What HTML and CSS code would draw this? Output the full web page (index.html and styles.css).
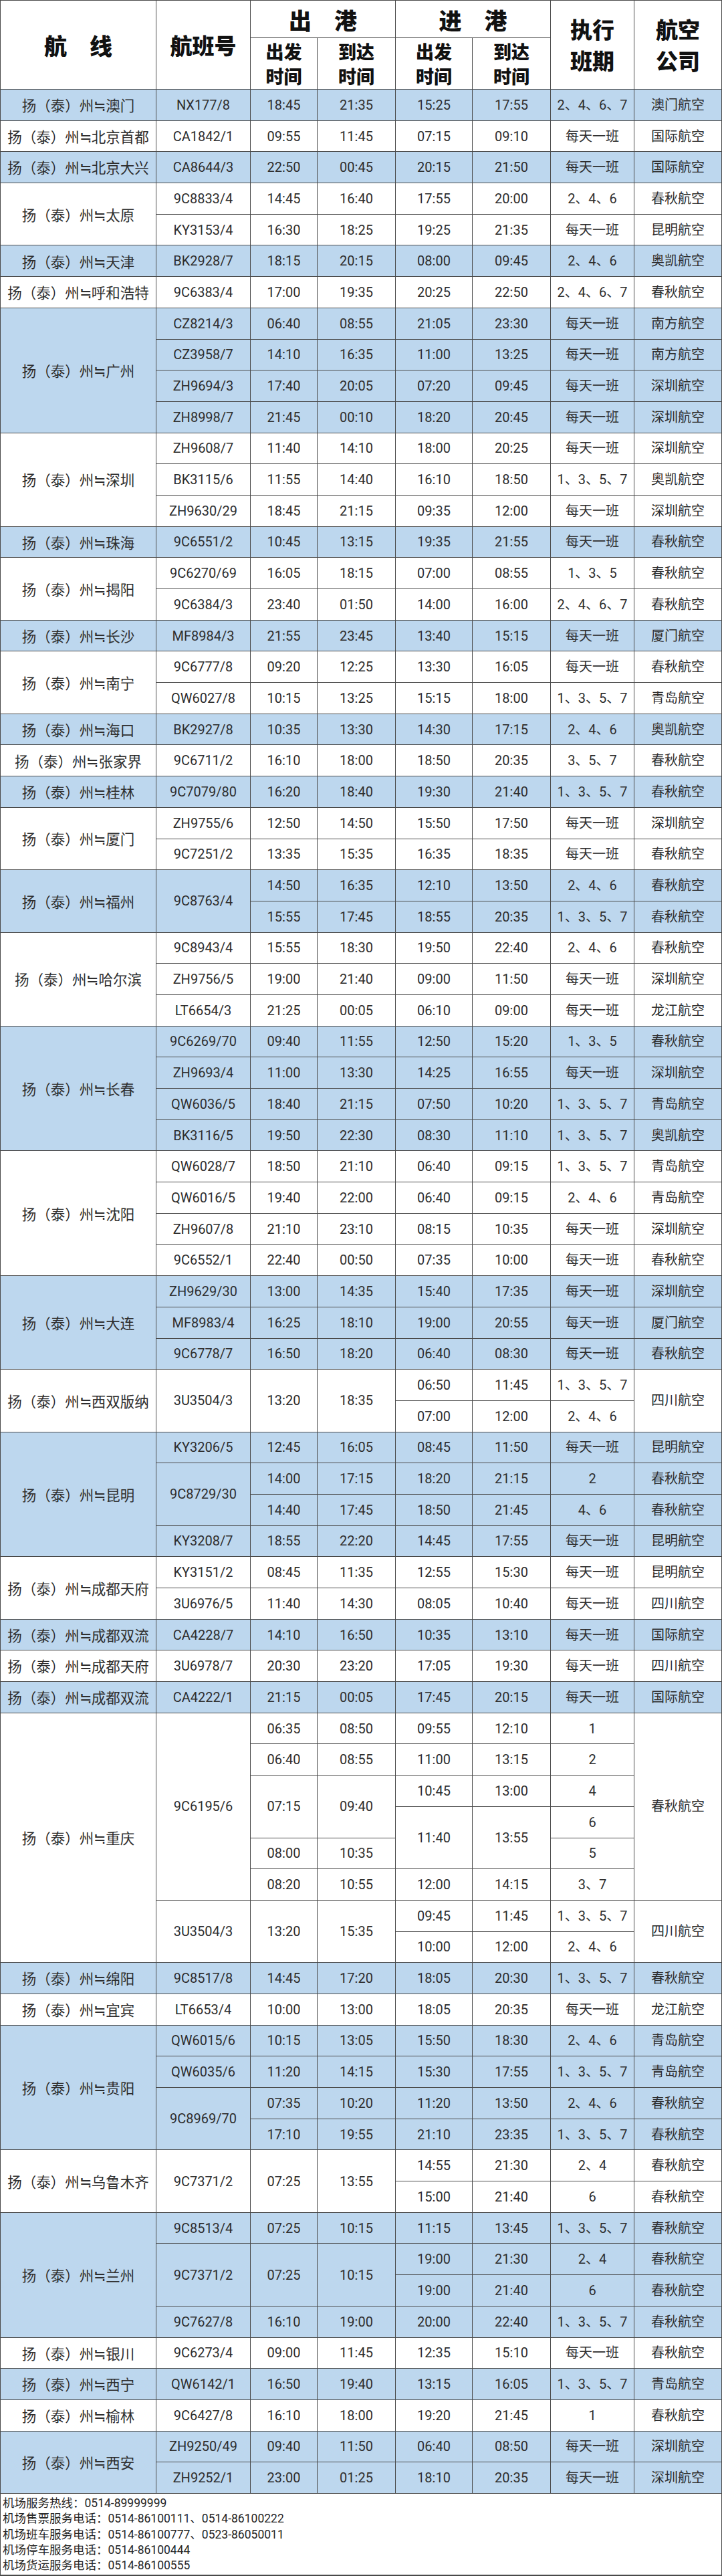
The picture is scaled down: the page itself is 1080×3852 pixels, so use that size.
FILE: index.html
```html
<!DOCTYPE html>
<html lang="zh-CN">
<head>
<meta charset="utf-8">
<title>扬州泰州国际机场航班时刻表</title>
<link rel="stylesheet" href="styles.css">
</head>
<body>
<div class="t">
  <div class="hd">
    <div class="h1 s2">航　线</div>
    <div class="h1 hn s2">航班号</div>
    <div class="h2 c2">出　港</div>
    <div class="h2 c2">进　港</div>
    <div class="h3 s2">执行<br>班期</div>
    <div class="h3 s2">航空<br>公司</div>
    <div class="h4">出发<br>时间</div>
    <div class="h4">到达<br>时间</div>
    <div class="h4">出发<br>时间</div>
    <div class="h4">到达<br>时间</div>
  </div>

  <div class="g b">
    <div class="r">扬（泰）州≒澳门</div><div>NX177/8</div><div>18:45</div><div>21:35</div><div>15:25</div><div>17:55</div><div>2、4、6、7</div><div>澳门航空</div>
  </div>
  <div class="g">
    <div class="r">扬（泰）州≒北京首都</div><div>CA1842/1</div><div>09:55</div><div>11:45</div><div>07:15</div><div>09:10</div><div>每天一班</div><div>国际航空</div>
  </div>
  <div class="g b">
    <div class="r">扬（泰）州≒北京大兴</div><div>CA8644/3</div><div>22:50</div><div>00:45</div><div>20:15</div><div>21:50</div><div>每天一班</div><div>国际航空</div>
  </div>
  <div class="g">
    <div class="r s2">扬（泰）州≒太原</div><div>9C8833/4</div><div>14:45</div><div>16:40</div><div>17:55</div><div>20:00</div><div>2、4、6</div><div>春秋航空</div>
    <div>KY3153/4</div><div>16:30</div><div>18:25</div><div>19:25</div><div>21:35</div><div>每天一班</div><div>昆明航空</div>
  </div>
  <div class="g b">
    <div class="r">扬（泰）州≒天津</div><div>BK2928/7</div><div>18:15</div><div>20:15</div><div>08:00</div><div>09:45</div><div>2、4、6</div><div>奥凯航空</div>
  </div>
  <div class="g">
    <div class="r">扬（泰）州≒呼和浩特</div><div>9C6383/4</div><div>17:00</div><div>19:35</div><div>20:25</div><div>22:50</div><div>2、4、6、7</div><div>春秋航空</div>
  </div>
  <div class="g b">
    <div class="r s4">扬（泰）州≒广州</div><div>CZ8214/3</div><div>06:40</div><div>08:55</div><div>21:05</div><div>23:30</div><div>每天一班</div><div>南方航空</div>
    <div>CZ3958/7</div><div>14:10</div><div>16:35</div><div>11:00</div><div>13:25</div><div>每天一班</div><div>南方航空</div>
    <div>ZH9694/3</div><div>17:40</div><div>20:05</div><div>07:20</div><div>09:45</div><div>每天一班</div><div>深圳航空</div>
    <div>ZH8998/7</div><div>21:45</div><div>00:10</div><div>18:20</div><div>20:45</div><div>每天一班</div><div>深圳航空</div>
  </div>
  <div class="g">
    <div class="r s3">扬（泰）州≒深圳</div><div>ZH9608/7</div><div>11:40</div><div>14:10</div><div>18:00</div><div>20:25</div><div>每天一班</div><div>深圳航空</div>
    <div>BK3115/6</div><div>11:55</div><div>14:40</div><div>16:10</div><div>18:50</div><div>1、3、5、7</div><div>奥凯航空</div>
    <div>ZH9630/29</div><div>18:45</div><div>21:15</div><div>09:35</div><div>12:00</div><div>每天一班</div><div>深圳航空</div>
  </div>
  <div class="g b">
    <div class="r">扬（泰）州≒珠海</div><div>9C6551/2</div><div>10:45</div><div>13:15</div><div>19:35</div><div>21:55</div><div>每天一班</div><div>春秋航空</div>
  </div>
  <div class="g">
    <div class="r s2">扬（泰）州≒揭阳</div><div>9C6270/69</div><div>16:05</div><div>18:15</div><div>07:00</div><div>08:55</div><div>1、3、5</div><div>春秋航空</div>
    <div>9C6384/3</div><div>23:40</div><div>01:50</div><div>14:00</div><div>16:00</div><div>2、4、6、7</div><div>春秋航空</div>
  </div>
  <div class="g b">
    <div class="r">扬（泰）州≒长沙</div><div>MF8984/3</div><div>21:55</div><div>23:45</div><div>13:40</div><div>15:15</div><div>每天一班</div><div>厦门航空</div>
  </div>
  <div class="g">
    <div class="r s2">扬（泰）州≒南宁</div><div>9C6777/8</div><div>09:20</div><div>12:25</div><div>13:30</div><div>16:05</div><div>每天一班</div><div>春秋航空</div>
    <div>QW6027/8</div><div>10:15</div><div>13:25</div><div>15:15</div><div>18:00</div><div>1、3、5、7</div><div>青岛航空</div>
  </div>
  <div class="g b">
    <div class="r">扬（泰）州≒海口</div><div>BK2927/8</div><div>10:35</div><div>13:30</div><div>14:30</div><div>17:15</div><div>2、4、6</div><div>奥凯航空</div>
  </div>
  <div class="g">
    <div class="r">扬（泰）州≒张家界</div><div>9C6711/2</div><div>16:10</div><div>18:00</div><div>18:50</div><div>20:35</div><div>3、5、7</div><div>春秋航空</div>
  </div>
  <div class="g b">
    <div class="r">扬（泰）州≒桂林</div><div>9C7079/80</div><div>16:20</div><div>18:40</div><div>19:30</div><div>21:40</div><div>1、3、5、7</div><div>春秋航空</div>
  </div>
  <div class="g">
    <div class="r s2">扬（泰）州≒厦门</div><div>ZH9755/6</div><div>12:50</div><div>14:50</div><div>15:50</div><div>17:50</div><div>每天一班</div><div>深圳航空</div>
    <div>9C7251/2</div><div>13:35</div><div>15:35</div><div>16:35</div><div>18:35</div><div>每天一班</div><div>春秋航空</div>
  </div>
  <div class="g b">
    <div class="r s2">扬（泰）州≒福州</div><div class="s2">9C8763/4</div><div>14:50</div><div>16:35</div><div>12:10</div><div>13:50</div><div>2、4、6</div><div>春秋航空</div>
    <div>15:55</div><div>17:45</div><div>18:55</div><div>20:35</div><div>1、3、5、7</div><div>春秋航空</div>
  </div>
  <div class="g">
    <div class="r s3">扬（泰）州≒哈尔滨</div><div>9C8943/4</div><div>15:55</div><div>18:30</div><div>19:50</div><div>22:40</div><div>2、4、6</div><div>春秋航空</div>
    <div>ZH9756/5</div><div>19:00</div><div>21:40</div><div>09:00</div><div>11:50</div><div>每天一班</div><div>深圳航空</div>
    <div>LT6654/3</div><div>21:25</div><div>00:05</div><div>06:10</div><div>09:00</div><div>每天一班</div><div>龙江航空</div>
  </div>
  <div class="g b">
    <div class="r s4">扬（泰）州≒长春</div><div>9C6269/70</div><div>09:40</div><div>11:55</div><div>12:50</div><div>15:20</div><div>1、3、5</div><div>春秋航空</div>
    <div>ZH9693/4</div><div>11:00</div><div>13:30</div><div>14:25</div><div>16:55</div><div>每天一班</div><div>深圳航空</div>
    <div>QW6036/5</div><div>18:40</div><div>21:15</div><div>07:50</div><div>10:20</div><div>1、3、5、7</div><div>青岛航空</div>
    <div>BK3116/5</div><div>19:50</div><div>22:30</div><div>08:30</div><div>11:10</div><div>1、3、5、7</div><div>奥凯航空</div>
  </div>
  <div class="g">
    <div class="r s4">扬（泰）州≒沈阳</div><div>QW6028/7</div><div>18:50</div><div>21:10</div><div>06:40</div><div>09:15</div><div>1、3、5、7</div><div>青岛航空</div>
    <div>QW6016/5</div><div>19:40</div><div>22:00</div><div>06:40</div><div>09:15</div><div>2、4、6</div><div>青岛航空</div>
    <div>ZH9607/8</div><div>21:10</div><div>23:10</div><div>08:15</div><div>10:35</div><div>每天一班</div><div>深圳航空</div>
    <div>9C6552/1</div><div>22:40</div><div>00:50</div><div>07:35</div><div>10:00</div><div>每天一班</div><div>春秋航空</div>
  </div>
  <div class="g b">
    <div class="r s3">扬（泰）州≒大连</div><div>ZH9629/30</div><div>13:00</div><div>14:35</div><div>15:40</div><div>17:35</div><div>每天一班</div><div>深圳航空</div>
    <div>MF8983/4</div><div>16:25</div><div>18:10</div><div>19:00</div><div>20:55</div><div>每天一班</div><div>厦门航空</div>
    <div>9C6778/7</div><div>16:50</div><div>18:20</div><div>06:40</div><div>08:30</div><div>每天一班</div><div>春秋航空</div>
  </div>
  <div class="g">
    <div class="r s2">扬（泰）州≒西双版纳</div><div class="s2">3U3504/3</div><div class="s2">13:20</div><div class="s2">18:35</div><div>06:50</div><div>11:45</div><div>1、3、5、7</div><div class="s2">四川航空</div>
    <div>07:00</div><div>12:00</div><div>2、4、6</div>
  </div>
  <div class="g b">
    <div class="r s4">扬（泰）州≒昆明</div><div>KY3206/5</div><div>12:45</div><div>16:05</div><div>08:45</div><div>11:50</div><div>每天一班</div><div>昆明航空</div>
    <div class="s2">9C8729/30</div><div>14:00</div><div>17:15</div><div>18:20</div><div>21:15</div><div>2</div><div>春秋航空</div>
    <div>14:40</div><div>17:45</div><div>18:50</div><div>21:45</div><div>4、6</div><div>春秋航空</div>
    <div>KY3208/7</div><div>18:55</div><div>22:20</div><div>14:45</div><div>17:55</div><div>每天一班</div><div>昆明航空</div>
  </div>
  <div class="g">
    <div class="r s2">扬（泰）州≒成都天府</div><div>KY3151/2</div><div>08:45</div><div>11:35</div><div>12:55</div><div>15:30</div><div>每天一班</div><div>昆明航空</div>
    <div>3U6976/5</div><div>11:40</div><div>14:30</div><div>08:05</div><div>10:40</div><div>每天一班</div><div>四川航空</div>
  </div>
  <div class="g b">
    <div class="r">扬（泰）州≒成都双流</div><div>CA4228/7</div><div>14:10</div><div>16:50</div><div>10:35</div><div>13:10</div><div>每天一班</div><div>国际航空</div>
  </div>
  <div class="g">
    <div class="r">扬（泰）州≒成都天府</div><div>3U6978/7</div><div>20:30</div><div>23:20</div><div>17:05</div><div>19:30</div><div>每天一班</div><div>四川航空</div>
  </div>
  <div class="g b">
    <div class="r">扬（泰）州≒成都双流</div><div>CA4222/1</div><div>21:15</div><div>00:05</div><div>17:45</div><div>20:15</div><div>每天一班</div><div>国际航空</div>
  </div>
  <div class="g">
    <div class="r s8">扬（泰）州≒重庆</div><div class="s6">9C6195/6</div><div>06:35</div><div>08:50</div><div>09:55</div><div>12:10</div><div>1</div><div class="s6">春秋航空</div>
    <div>06:40</div><div>08:55</div><div>11:00</div><div>13:15</div><div>2</div>
    <div class="s2">07:15</div><div class="s2">09:40</div><div>10:45</div><div>13:00</div><div>4</div>
    <div class="s2">11:40</div><div class="s2">13:55</div><div>6</div>
    <div>08:00</div><div>10:35</div><div>5</div>
    <div>08:20</div><div>10:55</div><div>12:00</div><div>14:15</div><div>3、7</div>
    <div class="s2">3U3504/3</div><div class="s2">13:20</div><div class="s2">15:35</div><div>09:45</div><div>11:45</div><div>1、3、5、7</div><div class="s2">四川航空</div>
    <div>10:00</div><div>12:00</div><div>2、4、6</div>
  </div>
  <div class="g b">
    <div class="r">扬（泰）州≒绵阳</div><div>9C8517/8</div><div>14:45</div><div>17:20</div><div>18:05</div><div>20:30</div><div>1、3、5、7</div><div>春秋航空</div>
  </div>
  <div class="g">
    <div class="r">扬（泰）州≒宜宾</div><div>LT6653/4</div><div>10:00</div><div>13:00</div><div>18:05</div><div>20:35</div><div>每天一班</div><div>龙江航空</div>
  </div>
  <div class="g b">
    <div class="r s4">扬（泰）州≒贵阳</div><div>QW6015/6</div><div>10:15</div><div>13:05</div><div>15:50</div><div>18:30</div><div>2、4、6</div><div>青岛航空</div>
    <div>QW6035/6</div><div>11:20</div><div>14:15</div><div>15:30</div><div>17:55</div><div>1、3、5、7</div><div>青岛航空</div>
    <div class="s2">9C8969/70</div><div>07:35</div><div>10:20</div><div>11:20</div><div>13:50</div><div>2、4、6</div><div>春秋航空</div>
    <div>17:10</div><div>19:55</div><div>21:10</div><div>23:35</div><div>1、3、5、7</div><div>春秋航空</div>
  </div>
  <div class="g">
    <div class="r s2">扬（泰）州≒乌鲁木齐</div><div class="s2">9C7371/2</div><div class="s2">07:25</div><div class="s2">13:55</div><div>14:55</div><div>21:30</div><div>2、4</div><div>春秋航空</div>
    <div>15:00</div><div>21:40</div><div>6</div><div>春秋航空</div>
  </div>
  <div class="g b">
    <div class="r s4">扬（泰）州≒兰州</div><div>9C8513/4</div><div>07:25</div><div>10:15</div><div>11:15</div><div>13:45</div><div>1、3、5、7</div><div>春秋航空</div>
    <div class="s2">9C7371/2</div><div class="s2">07:25</div><div class="s2">10:15</div><div>19:00</div><div>21:30</div><div>2、4</div><div>春秋航空</div>
    <div>19:00</div><div>21:40</div><div>6</div><div>春秋航空</div>
    <div>9C7627/8</div><div>16:10</div><div>19:00</div><div>20:00</div><div>22:40</div><div>1、3、5、7</div><div>春秋航空</div>
  </div>
  <div class="g">
    <div class="r">扬（泰）州≒银川</div><div>9C6273/4</div><div>09:00</div><div>11:45</div><div>12:35</div><div>15:10</div><div>每天一班</div><div>春秋航空</div>
  </div>
  <div class="g b">
    <div class="r">扬（泰）州≒西宁</div><div>QW6142/1</div><div>16:50</div><div>19:40</div><div>13:15</div><div>16:05</div><div>1、3、5、7</div><div>青岛航空</div>
  </div>
  <div class="g">
    <div class="r">扬（泰）州≒榆林</div><div>9C6427/8</div><div>16:10</div><div>18:00</div><div>19:20</div><div>21:45</div><div>1</div><div>春秋航空</div>
  </div>
  <div class="g b">
    <div class="r s2">扬（泰）州≒西安</div><div>ZH9250/49</div><div>09:40</div><div>11:50</div><div>06:40</div><div>08:50</div><div>每天一班</div><div>深圳航空</div>
    <div>ZH9252/1</div><div>23:00</div><div>01:25</div><div>18:10</div><div>20:35</div><div>每天一班</div><div>深圳航空</div>
  </div>
</div>
<div class="foot">
  <p>机场服务热线：0514-89999999</p>
  <p>机场售票服务电话：0514-86100111、0514-86100222</p>
  <p>机场班车服务电话：0514-86100777、0523-86050011</p>
  <p>机场停车服务电话：0514-86100444</p>
  <p>机场货运服务电话：0514-86100555</p>
</div>
</body>
</html>
```
FILE: styles.css
```css
html, body {
  margin: 0;
  padding: 0;
  background: #ffffff;
}

body {
  width: 1080px;
  font-family: "Roboto", "Noto Sans CJK SC", sans-serif;
  color: #2e2e2e;
}

.t {
  display: grid;
  grid-template-columns: 233px 141px 100px 117px 115px 117px 125px 131px;
  grid-template-rows: 56px 77px;
  grid-auto-rows: 46.688px;
  border-top: 1px solid #4a4a4a;
  border-left: 1px solid #4a4a4a;
  width: 1080px;
  box-sizing: border-box;
}

.hd, .g {
  display: contents;
}

.hd > div,
.g > div {
  box-sizing: border-box;
  display: flex;
  align-items: center;
  justify-content: center;
  text-align: center;
  border-right: 1px solid #4a4a4a;
  border-bottom: 1px solid #4a4a4a;
  white-space: nowrap;
}

.g > div {
  font-size: 20px;
  line-height: 1;
}

.b > div {
  background: #bdd7ee;
}

.hd > div {
  font-family: "Noto Sans CJK SC", sans-serif;
  font-weight: 900;
  color: #111111;
  background: #ffffff;
}

.h1 { font-size: 34px; }
.hn { font-size: 33px; }
.h2 { font-size: 34px; line-height: 1; padding-top: 2px; }
.h3 { font-size: 33px; line-height: 47px; }
.h4 { font-size: 27px; line-height: 37px; }

.g > .r {
  font-family: "Noto Sans CJK SC", sans-serif;
  font-size: 21.5px;
}

.s2 { grid-row: span 2; }
.s3 { grid-row: span 3; }
.s4 { grid-row: span 4; }
.s6 { grid-row: span 6; }
.s8 { grid-row: span 8; }
.c2 { grid-column: span 2; }

.foot {
  box-sizing: border-box;
  width: 1080px;
  height: 123px;
  border-left: 1px solid #4a4a4a;
  border-right: 1px solid #4a4a4a;
  border-bottom: 2px solid #4a4a4a;
  padding: 3px 0 0 3px;
  font-size: 17.5px;
  color: #262626;
}

.foot p {
  margin: 0;
  line-height: 23.3px;
  white-space: nowrap;
}
```
